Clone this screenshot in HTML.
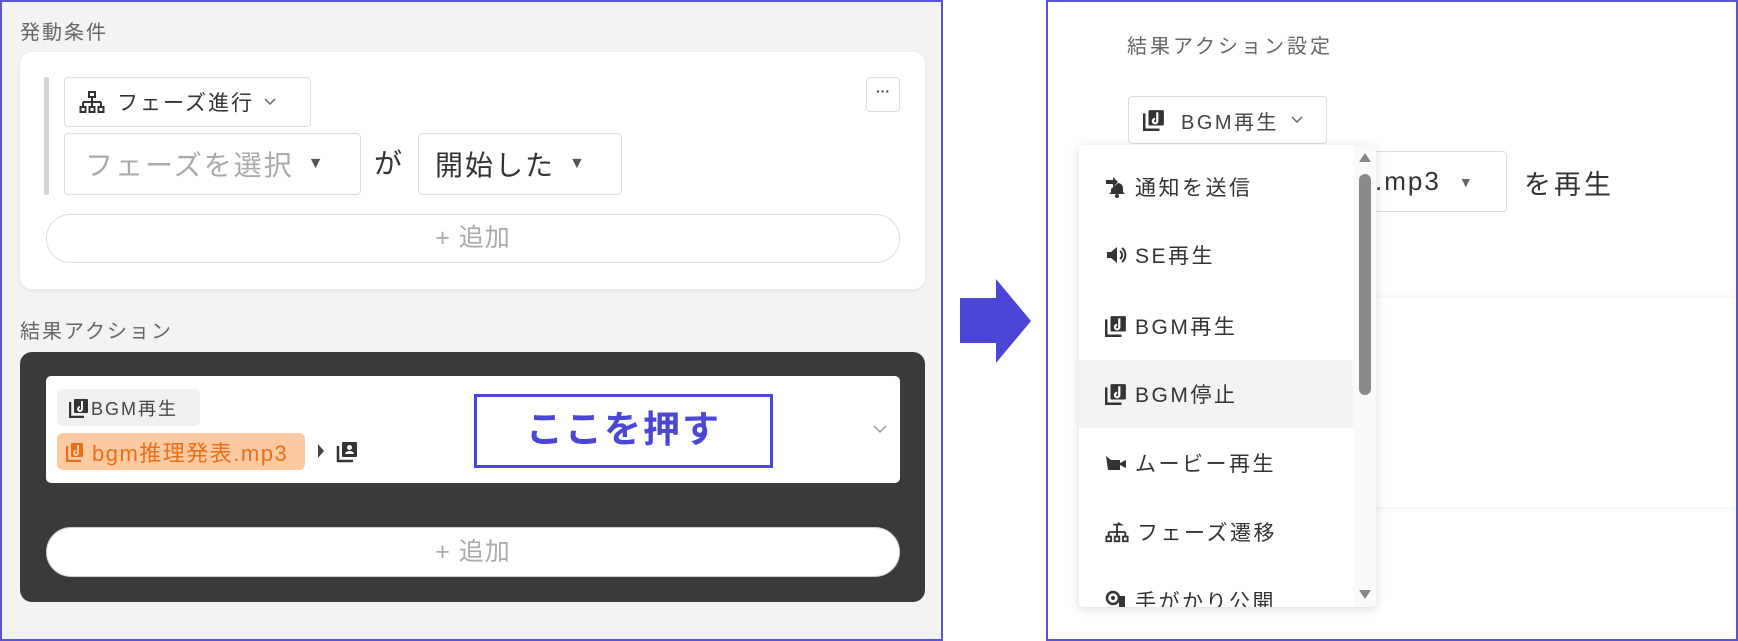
<!DOCTYPE html>
<html><head><meta charset="utf-8">
<style>
*{box-sizing:border-box;margin:0;padding:0}
body{width:1738px;height:641px;background:#fff;position:relative;overflow:hidden;font-family:"Liberation Sans","Noto Sans CJK JP",sans-serif;color:#333}
.abs{position:absolute}
#left{left:0;top:0;width:943px;height:641px;background:#f3f3f3;border:2px solid #5a55d8}
.lbl{font-size:20px;color:#666;letter-spacing:2px}
.sel{background:#fff;border:1px solid #ddd;border-radius:4px}
.pill{background:#fff;border:1px solid #ddd;border-radius:26px;color:#aaa;font-size:25px;text-align:center;letter-spacing:1px}
#right{left:1046px;top:0;width:692px;height:641px;background:#fff;border:2px solid #5a55d8}
.item{position:absolute;left:0;width:274px;height:69px;font-size:21px;letter-spacing:2.5px;color:#333;display:flex;align-items:center;padding-left:26px}
.item svg{margin-right:8px}
</style></head><body>
<div id="left" class="abs"></div>
<div class="abs lbl" style="left:20px;top:16px">発動条件</div>
<div class="abs" style="left:20px;top:52px;width:905px;height:237px;background:#fff;border-radius:12px;box-shadow:0 2px 6px rgba(0,0,0,.06)"></div>
<div class="abs" style="left:44px;top:77px;width:5px;height:118px;background:#d4d4d4;border-radius:2px"></div>
<div class="abs sel" style="left:64px;top:77px;width:247px;height:50px;display:flex;align-items:center;padding-left:14px;font-size:21px;letter-spacing:2px">
<svg width="26" height="22" viewBox="0 0 26 22"><rect x="10" y="1" width="6" height="5" fill="none" stroke="#333" stroke-width="2"/><path d="M13 6v5M4 11h18M4 11v5M13 11v5M22 11v5" stroke="#333" stroke-width="2" fill="none"/><rect x="1.5" y="16" width="5" height="5" fill="none" stroke="#333" stroke-width="2"/><rect x="10.5" y="16" width="5" height="5" fill="none" stroke="#333" stroke-width="2"/><rect x="19.5" y="16" width="5" height="5" fill="none" stroke="#333" stroke-width="2"/></svg>
<span style="margin-left:12px">フェーズ進行</span><svg style="margin-left:10px" width="12" height="8" viewBox="0 0 12 8"><path d="M1 1l5 5 5-5" stroke="#666" stroke-width="1.5" fill="none"/></svg></div>
<div class="abs sel" style="left:866px;top:77px;width:34px;height:35px;text-align:center;font-size:14px;line-height:26px;color:#444;font-weight:bold">···</div>
<div class="abs sel" style="left:64px;top:133px;width:297px;height:62px;display:flex;align-items:center;padding-left:20px;font-size:28px;color:#aaa;letter-spacing:2px">フェーズを選択<span style="margin-left:14px;font-size:16px;color:#555">▼</span></div>
<div class="abs" style="left:374px;top:142px;font-size:28px;color:#333">が</div>
<div class="abs sel" style="left:418px;top:133px;width:204px;height:62px;display:flex;align-items:center;padding-left:16px;font-size:28px;color:#333;letter-spacing:2px">開始した<span style="margin-left:14px;font-size:16px;color:#555">▼</span></div>
<div class="abs pill" style="left:46px;top:214px;width:854px;height:49px;line-height:47px">+ 追加</div>

<div class="abs lbl" style="left:20px;top:315px">結果アクション</div>
<div class="abs" style="left:20px;top:352px;width:905px;height:250px;background:#3a3a3a;border-radius:12px"></div>
<div class="abs" style="left:46px;top:376px;width:854px;height:107px;background:#fff;border-radius:5px"></div>
<div class="abs" style="left:57px;top:389px;width:143px;height:37px;background:#f0f0f0;border-radius:6px;display:flex;align-items:center;padding-left:12px;font-size:18px;letter-spacing:2px;color:#444">
<svg width="20" height="20" viewBox="0 0 20 20"><path d="M1 4v15h14" stroke="#333" stroke-width="2.5" fill="none"/><rect x="5" y="1" width="14" height="14" rx="1" fill="#333"/><path d="M13 3v8a2 2 0 1 1-2-2" stroke="#fff" stroke-width="2" fill="none"/></svg><span style="margin-left:2px">BGM再生</span></div>
<div class="abs" style="left:57px;top:433px;width:248px;height:37px;background:#fdc9a0;border-radius:6px;display:flex;align-items:center;padding-left:9px;font-size:22px;letter-spacing:1.5px;color:#e86f1c">
<svg width="18" height="20" viewBox="0 0 18 20"><path d="M1 4v15h14" stroke="#e86f1c" stroke-width="2.5" fill="none"/><rect x="5" y="1" width="12" height="14" rx="1" fill="#e86f1c"/><path d="M12 3v8a2 2 0 1 1-2-2" stroke="#fdc9a0" stroke-width="2" fill="none"/></svg><span style="margin-left:8px">bgm推理発表.mp3</span></div>
<div class="abs" style="left:318px;top:444px;width:0;height:0;border-left:6px solid #444;border-top:7px solid transparent;border-bottom:7px solid transparent"></div>
<svg class="abs" style="left:336px;top:441px" width="22" height="22" viewBox="0 0 22 22"><path d="M2 5v15h15" stroke="#333" stroke-width="2.5" fill="none"/><rect x="6" y="1" width="15" height="15" rx="1" fill="#333"/><circle cx="13.5" cy="6.5" r="2.5" fill="#fff"/><path d="M9 13a4.5 3 0 0 1 9 0z" fill="#fff"/></svg>
<div class="abs" style="left:474px;top:394px;width:299px;height:74px;border:3px solid #4b46d6;color:#4b46d6;font-size:37px;font-weight:bold;text-align:center;line-height:66px;letter-spacing:2px">ここを押す</div>
<svg class="abs" style="left:873px;top:425px" width="14" height="9" viewBox="0 0 14 9"><path d="M1 1l6 6 6-6" stroke="#999" stroke-width="1.5" fill="none"/></svg>
<div class="abs pill" style="left:46px;top:527px;width:854px;height:50px;line-height:48px;border-color:#ccc">+ 追加</div>

<svg class="abs" style="left:958px;top:278px" width="74" height="86" viewBox="0 0 74 86"><path d="M2 20h36V1l35 42-35 42V65H2z" fill="#4b46d6"/></svg>

<div id="right" class="abs"></div>
<div class="abs" style="left:1127px;top:30px;font-size:20px;color:#666;letter-spacing:3px">結果アクション設定</div>
<div class="abs sel" style="left:1128px;top:96px;width:199px;height:48px;display:flex;align-items:center;padding-left:14px;font-size:20px;letter-spacing:2.5px;color:#444">
<svg width="22" height="22" viewBox="0 0 20 20"><path d="M1 4v15h14" stroke="#333" stroke-width="2.5" fill="none"/><rect x="5" y="1" width="14" height="14" rx="1" fill="#333"/><path d="M13 3v8a2 2 0 1 1-2-2" stroke="#fff" stroke-width="2" fill="none"/></svg><span style="margin-left:16px">BGM再生</span><svg style="margin-left:12px" width="12" height="8" viewBox="0 0 12 8"><path d="M1 1l5 5 5-5" stroke="#666" stroke-width="1.5" fill="none"/></svg></div>
<div class="abs sel" style="left:1300px;top:151px;width:207px;height:61px;display:flex;align-items:center;padding-left:74px;font-size:26px;letter-spacing:2px;color:#333">.mp3<span style="margin-left:18px;font-size:14px;color:#666">▼</span></div>
<div class="abs" style="left:1524px;top:163px;font-size:27px;letter-spacing:3px;color:#333">を再生</div>
<div class="abs" style="left:1300px;top:298px;width:436px;height:209px;background:#fff;box-shadow:0 0 6px rgba(90,90,160,.12)"></div>

<div class="abs" style="left:1079px;top:145px;width:297px;height:462px;background:#fff;box-shadow:0 2px 10px rgba(0,0,0,.15);border-radius:4px;overflow:hidden">
<div class="abs" style="left:274px;top:0;width:23px;height:462px;background:#fafafa"></div>
<div class="abs" style="left:280px;top:8px;width:0;height:0;border-bottom:9px solid #888;border-left:6px solid transparent;border-right:6px solid transparent"></div>
<div class="abs" style="left:280px;top:29px;width:12px;height:221px;background:#8a8a8a;border-radius:6px"></div>
<div class="abs" style="left:280px;top:445px;width:0;height:0;border-top:9px solid #888;border-left:6px solid transparent;border-right:6px solid transparent"></div>
<div class="abs" style="left:0;top:215px;width:274px;height:68px;background:#f3f3f3"></div>
<div class="item" style="top:7px"><svg width="22" height="22" viewBox="0 0 22 22"><path d="M1 4h7V1l5 5-5 5V8H1z" fill="#333"/><path d="M13 7a5 5 0 0 1 5 5v4l2 2H4l2-2v-3" fill="#333"/><circle cx="12" cy="20" r="2" fill="#333"/></svg>通知を送信</div>
<div class="item" style="top:75px"><svg width="22" height="22" viewBox="0 0 22 22"><path d="M2 8h4l6-5v16l-6-5H2z" fill="#333"/><path d="M15 7a5 5 0 0 1 0 8M17 4a9 9 0 0 1 0 14" stroke="#333" stroke-width="2" fill="none"/></svg>SE再生</div>
<div class="item" style="top:146px"><svg width="22" height="22" viewBox="0 0 20 20"><path d="M1 4v15h14" stroke="#333" stroke-width="2.5" fill="none"/><rect x="5" y="1" width="14" height="14" rx="1" fill="#333"/><path d="M13 3v8a2 2 0 1 1-2-2" stroke="#fff" stroke-width="2" fill="none"/></svg>BGM再生</div>
<div class="item" style="top:214px"><svg width="22" height="22" viewBox="0 0 20 20"><path d="M1 4v15h14" stroke="#333" stroke-width="2.5" fill="none"/><rect x="5" y="1" width="14" height="14" rx="1" fill="#333"/><path d="M13 3v8a2 2 0 1 1-2-2" stroke="#fff" stroke-width="2" fill="none"/></svg>BGM停止</div>
<div class="item" style="top:283px"><svg width="22" height="22" viewBox="0 0 22 22"><path d="M1 4l5 4h9v10H3z" fill="#333"/><path d="M15 11l6-3v8l-6-3z" fill="#333"/></svg>ムービー再生</div>
<div class="item" style="top:352px"><svg width="24" height="22" viewBox="0 0 26 22"><path d="M9 3h8l-3-2M13 4v7M4 11h18M4 11v5M13 11v5M22 11v5" stroke="#333" stroke-width="2" fill="none"/><rect x="1.5" y="16" width="5" height="5" fill="none" stroke="#333" stroke-width="2"/><rect x="10.5" y="16" width="5" height="5" fill="none" stroke="#333" stroke-width="2"/><rect x="19.5" y="16" width="5" height="5" fill="none" stroke="#333" stroke-width="2"/></svg>フェーズ遷移</div>
<div class="item" style="top:421px"><svg width="22" height="22" viewBox="0 0 22 22"><circle cx="8" cy="8" r="6" fill="none" stroke="#333" stroke-width="2.5"/><circle cx="8" cy="8" r="2" fill="#333"/><path d="M14 6h6v15h-6z" fill="#333"/></svg>手がかり公開</div>
</div>
</body></html>
